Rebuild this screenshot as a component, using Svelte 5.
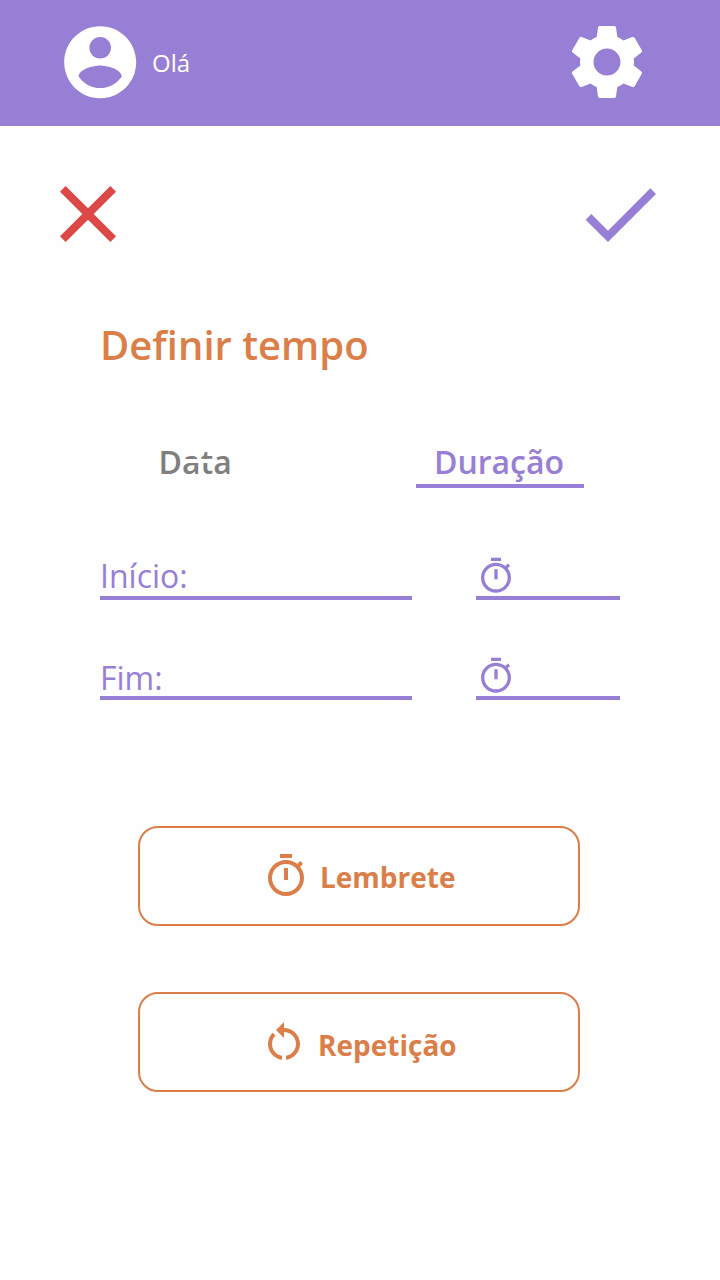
<script>
  const timer = 'M15 1H9v2h6V1zm-4 13h2V8h-2v6zm8.03-6.61l1.42-1.42c-.43-.51-.9-.99-1.41-1.41l-1.42 1.42C16.07 4.74 14.12 4 12 4c-4.97 0-9 4.03-9 9s4.02 9 9 9 9-4.03 9-9c0-2.12-.74-4.07-1.97-5.61zM12 20c-3.87 0-7-3.13-7-7s3.13-7 7-7 7 3.13 7 7-3.13 7-7 7z';
  const restart = 'M12 5V2L8 6l4 4V7c3.31 0 6 2.69 6 6 0 2.97-2.17 5.43-5 5.91v2.02c3.95-.49 7-3.85 7-7.93 0-4.42-3.58-8-8-8zM6 13c0-1.65.67-3.15 1.76-4.24L6.34 7.34C4.9 8.79 4 10.79 4 13c0 4.08 3.05 7.44 7 7.93v-2.02c-2.83-.48-5-2.94-5-5.91z';
  const account = 'M12 2C6.48 2 2 6.48 2 12s4.48 10 10 10 10-4.48 10-10S17.52 2 12 2zm0 3c1.66 0 3 1.34 3 3s-1.34 3-3 3-3-1.34-3-3 1.34-3 3-3zm0 14.2c-2.5 0-4.71-1.28-6-3.22.03-1.99 4-3.08 6-3.08 1.99 0 5.97 1.09 6 3.08-1.29 1.94-3.5 3.22-6 3.22z';
  const gear = 'M19.14 12.94c.04-.3.06-.61.06-.94 0-.32-.02-.64-.07-.94l2.03-1.58c.18-.14.23-.41.12-.61l-1.92-3.32c-.12-.22-.37-.29-.59-.22l-2.39.96c-.5-.38-1.03-.7-1.62-.94l-.36-2.54c-.04-.24-.24-.41-.48-.41h-3.84c-.24 0-.43.17-.47.41l-.36 2.54c-.59.24-1.13.57-1.62.94l-2.39-.96c-.22-.08-.47 0-.59.22L2.74 8.87c-.12.21-.08.47.12.61l2.03 1.58c-.05.3-.09.63-.09.94s.02.64.07.94l-2.03 1.58c-.18.14-.23.41-.12.61l1.92 3.32c.12.22.37.29.59.22l2.39-.96c.5.38 1.03.7 1.62.94l.36 2.54c.05.24.24.41.48.41h3.84c.24 0 .44-.17.47-.41l.36-2.54c.59-.24 1.13-.56 1.62-.94l2.39.96c.22.08.47 0 .59-.22l1.92-3.32c.12-.22.07-.47-.12-.61l-2.01-1.58zM12 15.6c-1.98 0-3.6-1.62-3.6-3.6s1.62-3.6 3.6-3.6 3.6 1.62 3.6 3.6-1.62 3.6-3.6 3.6z';
  const close = 'M19 6.41L17.59 5 12 10.59 6.41 5 5 6.41 10.59 12 5 17.59 6.41 19 12 13.41 17.59 19 19 17.59 13.41 12z';
  const check = 'M9 16.17L4.83 12l-1.42 1.41L9 19 21 7l-1.41-1.41z';
  const fields = ['Início:', 'Fim:'];
</script>

{#snippet icon(d, size)}
  <svg viewBox="0 0 24 24" width={size} height={size} fill="currentColor"><path {d} /></svg>
{/snippet}

<div class="screen">
  <header>
    <div class="user">{@render icon(account, 86.4)}<span>Olá</span></div>
    {@render icon(gear, 90)}
  </header>
  <div class="actions">
    <span class="cancel">{@render icon(close, 96)}</span>
    {@render icon(check, 96)}
  </div>
  <main>
    <h1>Definir tempo</h1>
    <nav>
      <span class="tab muted">Data</span>
      <span class="tab active">Duração</span>
    </nav>
    <div class="fields">
      {#each fields as label, i}
        <div class="row">
          <div class="field" class:last={i === 1}><span>{label}</span></div>
          <div class="time">{@render icon(timer, 40)}</div>
        </div>
      {/each}
    </div>
  </main>
  <div class="buttons">
    <button class="reminder">{@render icon(timer, 48)}<span>Lembrete</span></button>
    <button class="repeat">{@render icon(restart, 48)}<span>Repetição</span></button>
  </div>
</div>

<style>
  :global(body) { margin: 0; background: #fefefe; }
  .screen {
    --purple: #987fd6;
    --orange: #db7e48;
    width: 720px;
    height: 1280px;
    overflow: hidden;
    font-family: "Open Sans", sans-serif;
    color: var(--purple);
  }
  svg { display: block; flex: none; }
  header {
    height: 126px;
    box-sizing: border-box;
    padding: 0 68px 2px 56.8px;
    display: flex;
    align-items: center;
    justify-content: space-between;
    background: var(--purple);
    color: #fff;
  }
  .user { display: flex; align-items: center; gap: 8.8px; font-size: 24px; font-weight: 400; }
  .user span { line-height: 34px; padding-top: 2px; }
  .actions { display: flex; justify-content: space-between; padding: 40px 52px 0 40px; }
  .cancel { color: #dc4845; }
  main { padding: 0 100px; }
  h1 { margin: 55px 0 0; font-size: 40px; font-weight: 600; line-height: 56px; color: var(--orange); }
  nav { display: flex; justify-content: space-between; margin-top: 67px; padding: 0 36px 0 58.5px; font-size: 32px; font-weight: 600; line-height: 44px; }
  .tab { height: 44px; }
  .active { width: 166px; padding-right: 2px; text-align: center; border-bottom: 4px solid var(--purple); }
  .muted {
    position: relative;
    color: #7f7f7f;
  }
  .muted::after {
    content: "";
    position: absolute;
    left: 24px;
    top: 19px;
    width: 32px;
    height: 4px;
    background: #fefefe;
  }
  .fields { display: flex; flex-direction: column; gap: 56px; margin-top: 68px; }
  .row { display: flex; justify-content: space-between; height: 44px; }
  .field, .time { box-sizing: border-box; border-bottom: 4px solid var(--purple); }
  .field { width: 312px; font-size: 32px; font-weight: 400; line-height: 40px; }
  .field.last { line-height: 44px; }
  .time { width: 144px; }
  .buttons { display: flex; flex-direction: column; gap: 66px; margin: 126px 140px 0 138px; }
  button {
    height: 100px;
    box-sizing: border-box;
    display: flex;
    align-items: center;
    border: 2px solid var(--orange);
    border-radius: 20px;
    background: none;
    color: var(--orange);
    font: 700 28px/40px "Open Sans", sans-serif;
  }
  .reminder { padding: 0 0 0 122px; gap: 10px; }
  .repeat { padding: 0 0 0 120px; gap: 10px; }
  .reminder span { padding-top: 2px; }
  .repeat span { padding-top: 6px; }
</style>
